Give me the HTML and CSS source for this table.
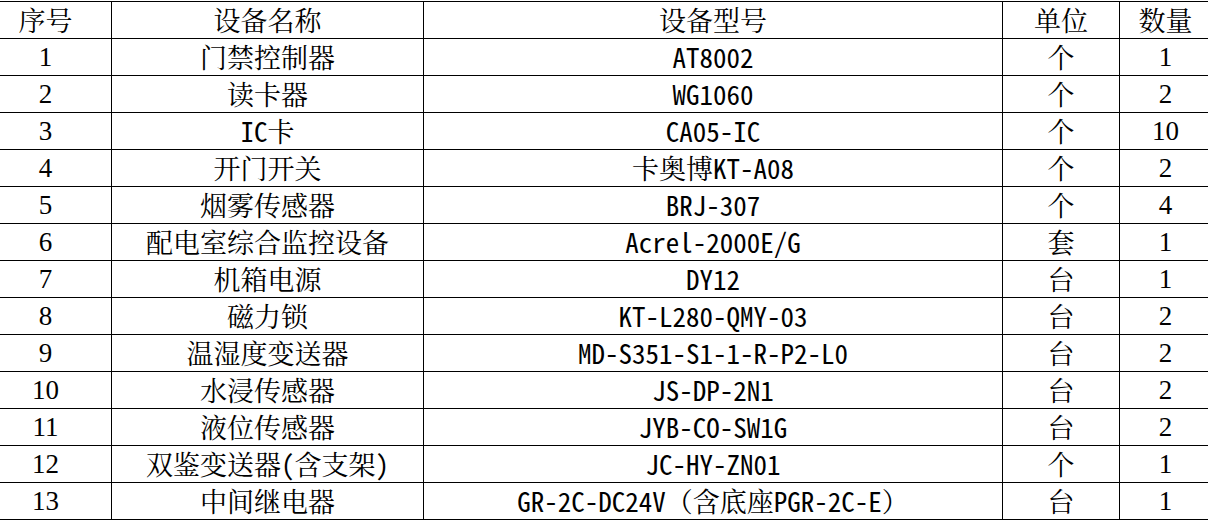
FILE: index.html
```html
<!DOCTYPE html>
<html lang="zh-CN">
<head>
<meta charset="utf-8">
<title>设备清单</title>
<link rel="stylesheet" href="styles.css">
</head>
<body>
<div class="frame">
<table class="equip">
  <colgroup>
    <col class="c-no">
    <col class="c-name">
    <col class="c-model">
    <col class="c-unit">
    <col class="c-qty">
  </colgroup>
  <thead>
    <tr><th>序号</th><th>设备名称</th><th>设备型号</th><th>单位</th><th>数量</th></tr>
  </thead>
  <tbody>
    <tr><td class="num">1</td><td>门禁控制器</td><td class="model">AT8002</td><td>个</td><td class="num">1</td></tr>
    <tr><td class="num">2</td><td>读卡器</td><td class="model">WG1060</td><td>个</td><td class="num">2</td></tr>
    <tr><td class="num">3</td><td><span class="lat">IC</span>卡</td><td class="model">CA05-IC</td><td>个</td><td class="num">10</td></tr>
    <tr><td class="num">4</td><td>开门开关</td><td class="model"><span class="han">卡奥博</span>KT-A08</td><td>个</td><td class="num">2</td></tr>
    <tr><td class="num">5</td><td>烟雾传感器</td><td class="model">BRJ-307</td><td>个</td><td class="num">4</td></tr>
    <tr><td class="num">6</td><td>配电室综合监控设备</td><td class="model">Acrel-2000E/G</td><td>套</td><td class="num">1</td></tr>
    <tr><td class="num">7</td><td>机箱电源</td><td class="model">DY12</td><td>台</td><td class="num">1</td></tr>
    <tr><td class="num">8</td><td>磁力锁</td><td class="model">KT-L280-QMY-03</td><td>台</td><td class="num">2</td></tr>
    <tr><td class="num">9</td><td>温湿度变送器</td><td class="model">MD-S351-S1-1-R-P2-L0</td><td>台</td><td class="num">2</td></tr>
    <tr><td class="num">10</td><td>水浸传感器</td><td class="model">JS-DP-2N1</td><td>台</td><td class="num">2</td></tr>
    <tr><td class="num">11</td><td>液位传感器</td><td class="model">JYB-CO-SW1G</td><td>台</td><td class="num">2</td></tr>
    <tr><td class="num">12</td><td>双鉴变送器<span class="lat">(</span>含支架<span class="lat">)</span></td><td class="model">JC-HY-ZN01</td><td>个</td><td class="num">1</td></tr>
    <tr><td class="num">13</td><td>中间继电器</td><td class="model">GR-2C-DC24V<span class="han">（含底座</span>PGR-2C-E<span class="han">）</span></td><td>台</td><td class="num">1</td></tr>
  </tbody>
</table>
</div>
</body>
</html>
```

FILE: styles.css
```css
html, body {
  margin: 0;
  padding: 0;
  background: #ffffff;
}

.frame {
  width: 1208px;
  overflow: hidden;
  padding-top: 1px;
}

.equip {
  border-collapse: collapse;
  table-layout: fixed;
  width: 1232px;
  margin-left: -21px;
  font-family: "Noto Serif CJK SC", "Noto Sans CJK SC", serif;
  font-size: 27px;
  color: #000000;
}

.c-no { width: 132px; }
.c-name { width: 312px; }
.c-model { width: 579px; }
.c-unit { width: 117px; }
.c-qty { width: 92px; }

.equip th,
.equip td {
  border: 1px solid #000000;
  height: 36px;
  padding: 0;
  line-height: 36px;
  text-align: center;
  vertical-align: middle;
  font-weight: normal;
  white-space: nowrap;
  overflow: hidden;
}

.equip td.num {
  font-family: "Liberation Serif", "Times New Roman", serif;
}

.equip .model,
.equip .lat {
  font-family: "Noto Sans Mono CJK SC", "Liberation Mono", monospace;
}

.equip .han {
  font-family: "Noto Serif CJK SC", "Noto Sans CJK SC", serif;
}
```
